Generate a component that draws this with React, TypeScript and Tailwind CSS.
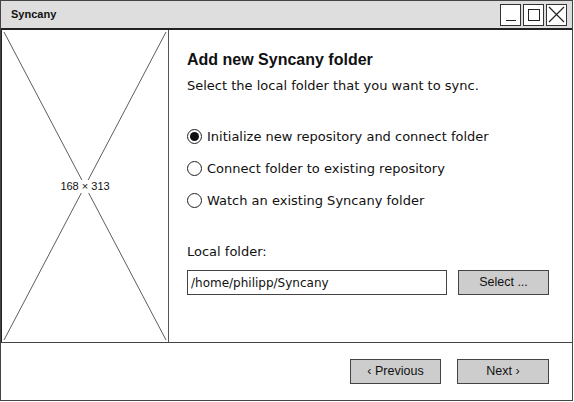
import { useState } from 'react';

// Sketch-style radio
const Radio = ({ checked }: { checked?: boolean }) => (
  <span className="flex h-[15px] w-[15px] shrink-0 items-center justify-center rounded-full border border-[#222] bg-white">
    {checked && <span className="h-[9px] w-[9px] rounded-full bg-[#111]" />}
  </span>
);

export default function App() {
  const [mode, setMode] = useState(0);

  const options = [
    'Initialize new repository and connect folder',
    'Connect folder to existing repository',
    'Watch an existing Syncany folder',
  ];

  return (
    <div
      className="flex h-[402px] w-[574px] flex-col overflow-hidden bg-white text-[#111]"
      style={{ fontFamily: '"Liberation Sans", Arial, sans-serif' }}
    >
      <div className="flex h-[401px] w-[573px] flex-col border border-[#444]">
        {/* Title bar */}
        <div className="flex h-[29px] shrink-0 items-center justify-between border-b-2 border-[#222] bg-[#dedede] pl-[10px] pr-[5px]">
          <span className="text-[11px] font-bold">Syncany</span>
          <div className="flex gap-[2px]">
            <button className="flex h-[22px] w-[21px] items-end justify-center border border-[#333] bg-white pb-[4px]">
              <span className="h-[1px] w-[10px] bg-[#222]" />
            </button>
            <button className="flex h-[22px] w-[21px] items-center justify-center border border-[#333] bg-white">
              <span className="h-[12px] w-[12px] border border-[#222]" />
            </button>
            <button className="flex h-[22px] w-[21px] items-center justify-center border border-[#333] bg-white">
              <svg width="17" height="17" viewBox="0 0 17 17" stroke="#222" strokeWidth="1.2">
                <path d="M1 1L16 16M16 1L1 16" />
              </svg>
            </button>
          </div>
        </div>

        {/* Body */}
        <div className="flex h-[312px] shrink-0">
          {/* Image placeholder */}
          <div className="relative h-full w-[168px] shrink-0 border-l border-r border-[#222] border-r-[#555]">
            <svg className="absolute inset-0" width="166" height="312" viewBox="0 0 166 312" stroke="#333" strokeWidth="0.8">
              <path d="M2 2L164 310M164 2L2 310" />
            </svg>
            <div className="absolute inset-0 flex items-center justify-center">
              <span className="bg-white px-[2px] text-[11px] leading-[13px]">168 × 313</span>
            </div>
          </div>

          {/* Content */}
          <div className="flex flex-1 flex-col pl-[18px] pt-[19px] font-['DejaVu_Sans',sans-serif]">
            <h1 className="font-['Liberation_Sans',Arial,sans-serif] text-[16px] font-bold leading-[22px]">
              Add new Syncany folder
            </h1>
            <p className="mt-[6px] text-[13px] leading-[17px]">Select the local folder that you want to sync.</p>

            <div className="mt-[34px] flex flex-col gap-[15px]">
              {options.map((o, i) => (
                <label
                  key={o}
                  className="flex h-[17px] cursor-pointer items-center gap-[5px] text-[13px]"
                  onClick={() => setMode(i)}
                >
                  <Radio checked={mode === i} />
                  <span>{o}</span>
                </label>
              ))}
            </div>

            <span className="mt-[34px] text-[13px] leading-[17px]">Local folder:</span>
            <div className="mt-[10px] flex items-center">
              <input
                className="h-[25px] w-[260px] border border-[#444] px-[3px] text-[12px] outline-none"
                defaultValue="/home/philipp/Syncany"
              />
              <button className="ml-[11px] h-[25px] w-[91px] border border-[#444] bg-[#cdcdcd] font-['Liberation_Sans',Arial,sans-serif] text-[12.5px]">
                Select ...
              </button>
            </div>
          </div>
        </div>

        {/* Footer */}
        <div className="flex flex-1 items-start justify-end border-t border-[#444] pr-[23px] pt-[16px] text-[12.5px]">
          <button className="h-[25px] w-[91px] border border-[#444] bg-[#cdcdcd]">‹ Previous</button>
          <button className="ml-[16px] h-[25px] w-[92px] border border-[#444] bg-[#cdcdcd]">Next ›</button>
        </div>
      </div>
    </div>
  );
}
